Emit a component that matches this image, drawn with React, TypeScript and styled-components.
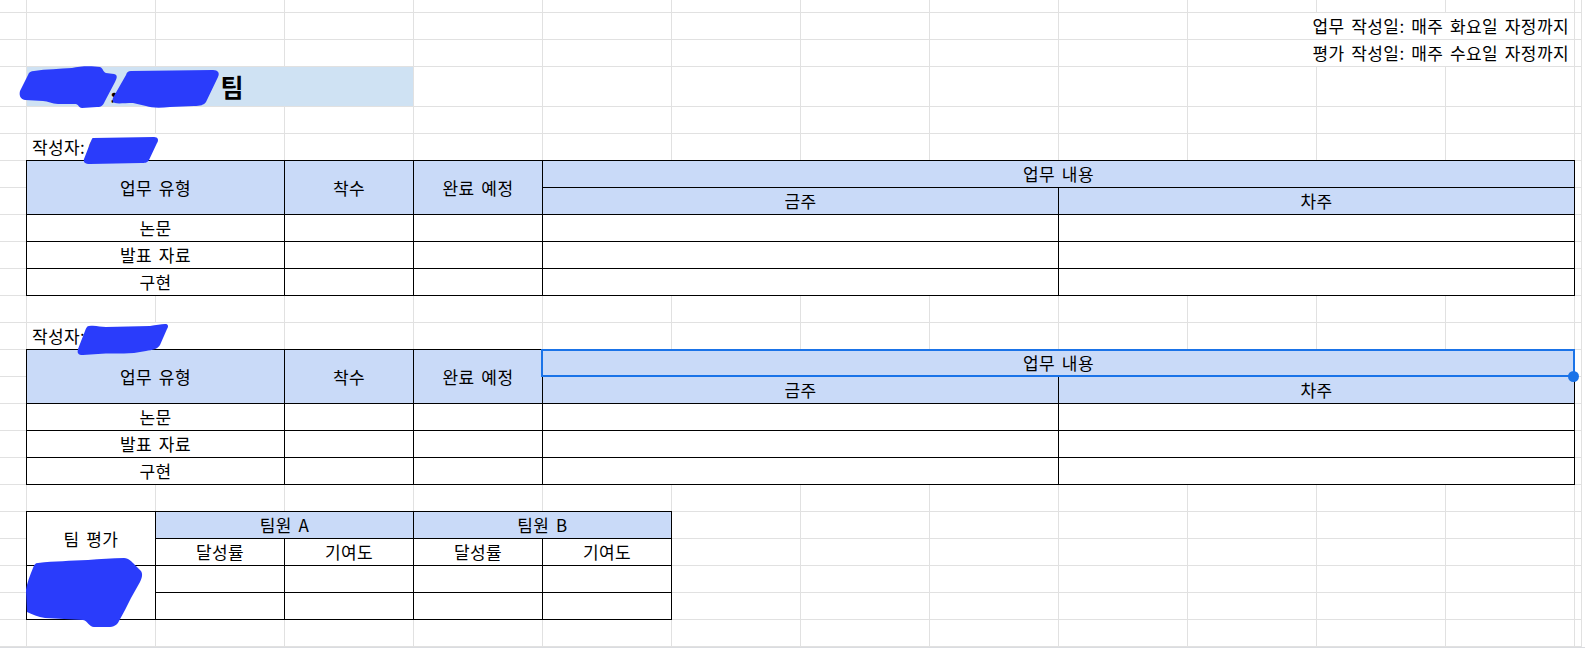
import React from "react";
import styled, { createGlobalStyle, css } from "styled-components";

const GRID = "#e1e1e1";
const HEAD = "#c9daf8";
const TITLE_BG = "#cfe2f3";
const INK = "#000000";
const SEL = "#1a73e8";
const SCRIBBLE = "#2a3cfb";

const colWidths = [27, ...Array(12).fill(129), 7, 3];
const rowHeights = [13, 27, 27, 40, ...Array(20).fill(27), 1];

const GlobalStyle = createGlobalStyle`
  html, body {
    margin: 0;
    padding: 0;
    background: #ffffff;
  }
  body {
    overflow: hidden;
    font-family: "Noto Sans CJK KR", "Noto Sans", sans-serif;
  }
`;

const Sheet = styled.div`
  position: relative;
  display: grid;
  grid-template-columns: ${colWidths.map((w) => `${w}px`).join(" ")};
  grid-template-rows: ${rowHeights.map((h) => `${h}px`).join(" ")};
  width: 1585px;
  height: 648px;
  overflow: hidden;
  background: #ffffff;
  font-family: "Noto Sans CJK KR", "Noto Sans", sans-serif;
  font-size: 17px;
  letter-spacing: 0.4px;
  word-spacing: 2.5px;
  line-height: 1;
  color: ${INK};
`;

type Place = { $c: number; $r: number; $cs?: number; $rs?: number };

const Placed = styled.div<Place>`
  grid-column: ${(p) => p.$c + 1} / span ${(p) => p.$cs ?? 1};
  grid-row: ${(p) => p.$r + 1} / span ${(p) => p.$rs ?? 1};
  min-width: 0;
  min-height: 0;
  box-sizing: border-box;
`;

const GridCell = styled(Placed)<{ $edge?: boolean }>`
  ${(p) =>
    !p.$edge &&
    css`
      border-right: 1px solid ${GRID};
      border-bottom: 1px solid ${GRID};
    `}
`;

const BottomEdge = styled(Placed)`
  background: #dadce0;
`;

const NoteCell = styled(Placed)`
  display: flex;
  align-items: flex-end;
  justify-content: flex-end;
  padding: 0 5px 5px 0;
  background: #ffffff;
  border-right: 1px solid ${GRID};
  border-bottom: 1px solid ${GRID};
  white-space: nowrap;
`;

const TitleCell = styled(Placed)`
  display: flex;
  align-items: center;
  padding-left: 8px;
  background: ${TITLE_BG};
  border-right: 1px solid ${GRID};
  border-bottom: 1px solid ${GRID};
  font-size: 25px;
  font-weight: 700;
  letter-spacing: 0;
  word-spacing: 8px;
  white-space: nowrap;
`;

const LabelCell = styled(Placed)`
  display: flex;
  align-items: flex-end;
  padding: 0 0 5px 5px;
  background: #ffffff;
  border-right: 1px solid ${GRID};
  border-bottom: 1px solid ${GRID};
  white-space: nowrap;
`;

const Name = styled.span`
  margin-left: 3px;
`;

const TableCell = styled(Placed)<{ $head?: boolean; $middle?: boolean }>`
  display: flex;
  justify-content: center;
  align-items: ${(p) => (p.$middle ? "center" : "flex-end")};
  padding-bottom: ${(p) => (p.$middle ? "0" : "5px")};
  margin: -1px 0 0 -1px;
  border: 1px solid ${INK};
  background: ${(p) => (p.$head ? HEAD : "#ffffff")};
  white-space: nowrap;
`;

const Selection = styled(Placed)`
  position: relative;
  margin: -1px 0 0 -2px;
  border: 2px solid ${SEL};
  pointer-events: none;
`;

const Handle = styled.span`
  position: absolute;
  right: -6px;
  bottom: -7px;
  width: 11px;
  height: 11px;
  border-radius: 50%;
  background: ${SEL};
`;

const Scribbles = styled.svg`
  position: absolute;
  left: 0;
  top: 0;
  width: 1585px;
  height: 648px;
  pointer-events: none;
`;

type TCell = {
  c: number;
  r: number;
  cs?: number;
  rs?: number;
  text?: string;
  head?: boolean;
  middle?: boolean;
};

const workTable = (top: number): TCell[] => [
  { c: 1, cs: 2, r: top, rs: 2, text: "업무 유형", head: true, middle: true },
  { c: 3, r: top, rs: 2, text: "착수", head: true, middle: true },
  { c: 4, r: top, rs: 2, text: "완료 예정", head: true, middle: true },
  { c: 5, cs: 8, r: top, text: "업무 내용", head: true },
  { c: 5, cs: 4, r: top + 1, text: "금주", head: true },
  { c: 9, cs: 4, r: top + 1, text: "차주", head: true },
  ...["논문", "발표 자료", "구현"].flatMap((t, i): TCell[] => [
    { c: 1, cs: 2, r: top + 2 + i, text: t },
    { c: 3, r: top + 2 + i },
    { c: 4, r: top + 2 + i },
    { c: 5, cs: 4, r: top + 2 + i },
    { c: 9, cs: 4, r: top + 2 + i },
  ]),
];

const evalTable = (top: number): TCell[] => [
  { c: 1, r: top, rs: 2, text: "팀 평가", middle: true },
  { c: 2, cs: 2, r: top, text: "팀원 A", head: true },
  { c: 4, cs: 2, r: top, text: "팀원 B", head: true },
  { c: 2, r: top + 1, text: "달성률" },
  { c: 3, r: top + 1, text: "기여도" },
  { c: 4, r: top + 1, text: "달성률" },
  { c: 5, r: top + 1, text: "기여도" },
  { c: 1, r: top + 2, rs: 2 },
  ...[0, 1].flatMap((i): TCell[] =>
    [2, 3, 4, 5].map((c) => ({ c, r: top + 2 + i }))
  ),
];

const tableCells: TCell[] = [...workTable(6), ...workTable(13), ...evalTable(19)];

const scribblePaths = [
  // title, left blob
  "M34 71 C46 69 60 69 72 68 C80 66 92 66 100 67 C103 68 103 72 106 73 L114 74 C118 75 117 78 115 82 L105 101 C103 105 102 107 97 107 L82 108 C79 108 79 105 76 104 L58 104 C52 104 48 101 43 101 L25 100 C20 99 19 95 20 91 L28 75 C29 72 31 71 34 71 Z",
  // title, right blob
  "M131 71 L213 70 C218 70 220 73 218 77 L206 102 C204 105 200 106 194 106 L170 107 C160 108 152 108 146 106 L133 103 C125 103 118 104 115 103 C112 102 112 99 114 96 L126 75 C127 72 128 71 131 71 Z",
  // author 1
  "M93 138 L154 137 C158 137 159 140 157 143 L149 160 C147 163 145 163 141 163 L90 164 C85 164 83 162 84 159 L91 141 C92 139 92 138 93 138 Z",
  // author 2
  "M89 326 C96 325 100 327 106 327 L150 326 C156 325 161 324 165 324 C168 324 169 326 167 329 L160 345 C158 349 152 350 146 351 L134 353 C120 354 108 353 98 354 L83 355 C78 355 77 353 78 349 L85 331 C86 328 87 326 89 326 Z",
  // team evaluation
  "M38 563 C55 561 70 561 88 560 C100 559 112 558 124 558 C129 558 132 562 135 565 L141 571 C143 574 142 578 140 582 L131 598 C127 606 123 614 119 621 C117 625 114 627 108 627 L94 627 C89 627 88 621 83 620 L45 618 C38 617 32 614 27 612 L26 590 C27 583 30 575 33 568 C34 565 35 563 38 563 Z",
];

export default function App() {
  const background: React.ReactNode[] = [];
  for (let r = 0; r < rowHeights.length - 1; r++) {
    for (let c = 0; c < colWidths.length; c++) {
      background.push(
        <GridCell key={`g-${r}-${c}`} $r={r} $c={c} $edge={c === colWidths.length - 1} />
      );
    }
  }

  return (
    <>
      <GlobalStyle />
      <Sheet>
        {background}
        <BottomEdge $r={rowHeights.length - 1} $c={0} $cs={colWidths.length} />

        <NoteCell $r={1} $c={10} $cs={3}>업무 작성일: 매주 화요일 자정까지</NoteCell>
        <NoteCell $r={2} $c={10} $cs={3}>평가 작성일: 매주 수요일 자정까지</NoteCell>

        <TitleCell $r={3} $c={1} $cs={3}>○○○, ○○○ 팀</TitleCell>

        <LabelCell $r={5} $c={1} $cs={2}>
          작성자: <Name>○○○</Name>
        </LabelCell>
        <LabelCell $r={12} $c={1} $cs={2}>
          작성자: <Name>○○○</Name>
        </LabelCell>

        {tableCells.map((t, i) => (
          <TableCell
            key={`t-${i}`}
            $c={t.c}
            $r={t.r}
            $cs={t.cs}
            $rs={t.rs}
            $head={t.head}
            $middle={t.middle}
          >
            {t.text}
          </TableCell>
        ))}

        <Selection $r={13} $c={5} $cs={8}>
          <Handle />
        </Selection>

        <Scribbles viewBox="0 0 1585 648" aria-hidden="true">
          {scribblePaths.map((d, i) => (
            <path key={i} d={d} fill={SCRIBBLE} />
          ))}
        </Scribbles>
      </Sheet>
    </>
  );
}
